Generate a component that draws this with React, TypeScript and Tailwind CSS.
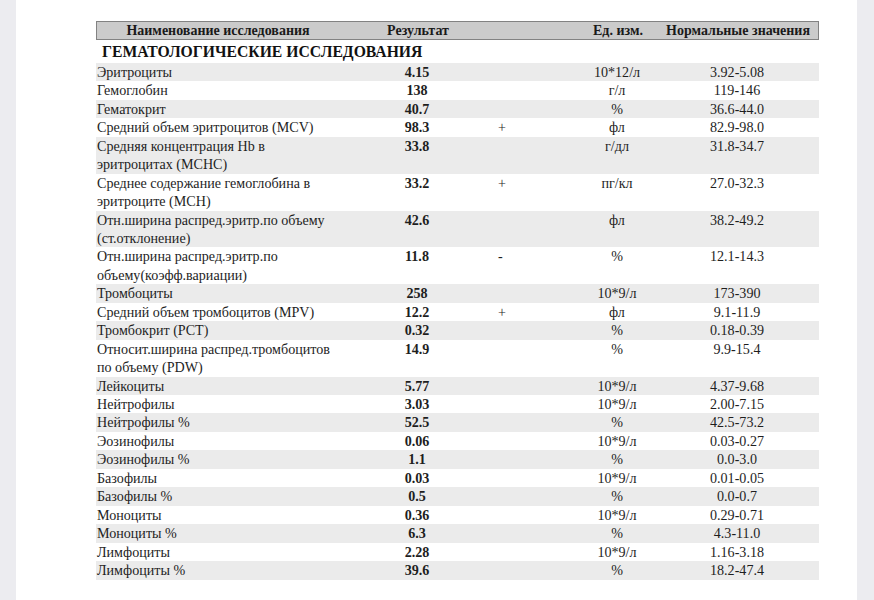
type Row = {
  name: string[];
  value: string;
  flag?: string;
  unit: string;
  norm: string;
};

const rows: Row[] = [
  { name: ["Эритроциты"], value: "4.15", unit: "10*12/л", norm: "3.92-5.08" },
  { name: ["Гемоглобин"], value: "138", unit: "г/л", norm: "119-146" },
  { name: ["Гематокрит"], value: "40.7", unit: "%", norm: "36.6-44.0" },
  { name: ["Средний объем эритроцитов (MCV)"], value: "98.3", flag: "+", unit: "фл", norm: "82.9-98.0" },
  { name: ["Средняя концентрация Hb в", "эритроцитах (MCHC)"], value: "33.8", unit: "г/дл", norm: "31.8-34.7" },
  { name: ["Среднее содержание гемоглобина в", "эритроците (MCH)"], value: "33.2", flag: "+", unit: "пг/кл", norm: "27.0-32.3" },
  { name: ["Отн.ширина распред.эритр.по объему", "(ст.отклонение)"], value: "42.6", unit: "фл", norm: "38.2-49.2" },
  { name: ["Отн.ширина распред.эритр.по", "объему(коэфф.вариации)"], value: "11.8", flag: "-", unit: "%", norm: "12.1-14.3" },
  { name: ["Тромбоциты"], value: "258", unit: "10*9/л", norm: "173-390" },
  { name: ["Средний объем тромбоцитов (MPV)"], value: "12.2", flag: "+", unit: "фл", norm: "9.1-11.9" },
  { name: ["Тромбокрит (PCT)"], value: "0.32", unit: "%", norm: "0.18-0.39" },
  { name: ["Относит.ширина распред.тромбоцитов", "по объему (PDW)"], value: "14.9", unit: "%", norm: "9.9-15.4" },
  { name: ["Лейкоциты"], value: "5.77", unit: "10*9/л", norm: "4.37-9.68" },
  { name: ["Нейтрофилы"], value: "3.03", unit: "10*9/л", norm: "2.00-7.15" },
  { name: ["Нейтрофилы %"], value: "52.5", unit: "%", norm: "42.5-73.2" },
  { name: ["Эозинофилы"], value: "0.06", unit: "10*9/л", norm: "0.03-0.27" },
  { name: ["Эозинофилы %"], value: "1.1", unit: "%", norm: "0.0-3.0" },
  { name: ["Базофилы"], value: "0.03", unit: "10*9/л", norm: "0.01-0.05" },
  { name: ["Базофилы %"], value: "0.5", unit: "%", norm: "0.0-0.7" },
  { name: ["Моноциты"], value: "0.36", unit: "10*9/л", norm: "0.29-0.71" },
  { name: ["Моноциты %"], value: "6.3", unit: "%", norm: "4.3-11.0" },
  { name: ["Лимфоциты"], value: "2.28", unit: "10*9/л", norm: "1.16-3.18" },
  { name: ["Лимфоциты %"], value: "39.6", unit: "%", norm: "18.2-47.4" },
];

const cols = "grid grid-cols-[242px_158px_83px_76px_164px]";

export default function App() {
  return (
    <div className="flex h-[600px] w-[874px] bg-[#ececf0] pl-[16px] pr-[17px] font-['Liberation_Serif','Times_New_Roman',serif]">
      <div className="flex-1 bg-white pl-[80px] pt-[21px] text-[#1e1e1e]">
        <div className="w-[723px]">
          {/* column header */}
          <div
            className={`${cols} h-[19px] items-center border border-[#828282] bg-[#cbcbcb] text-[14px] font-bold leading-none text-[#1a1a1a]`}
          >
            <div className="text-center">Наименование исследования</div>
            <div className="text-center">Результат</div>
            <div />
            <div className="text-center">Ед. изм.</div>
            <div className="text-center">Нормальные значения</div>
          </div>

          <div className="h-[23px] pl-[6px] text-[15.7px] font-bold leading-[23px] text-[#111]">
            ГЕМАТОЛОГИЧЕСКИЕ ИССЛЕДОВАНИЯ
          </div>

          {/* results */}
          <div className="text-[14.1px] leading-[18.45px]">
            {rows.map((r, i) => (
              <div
                key={r.name[0]}
                className={`${cols} ${i % 2 === 0 ? "bg-[#ebebeb]" : "bg-white"}`}
              >
                <div className="pl-[1px]">
                  {r.name.map((n) => (
                    <div key={n} className="h-[18.45px]">
                      {n}
                    </div>
                  ))}
                </div>
                <div className="text-center font-bold">{r.value}</div>
                <div className="pl-[2px]">{r.flag}</div>
                <div className="text-center">{r.unit}</div>
                <div className="text-center">{r.norm}</div>
              </div>
            ))}
          </div>
        </div>
      </div>
    </div>
  );
}
